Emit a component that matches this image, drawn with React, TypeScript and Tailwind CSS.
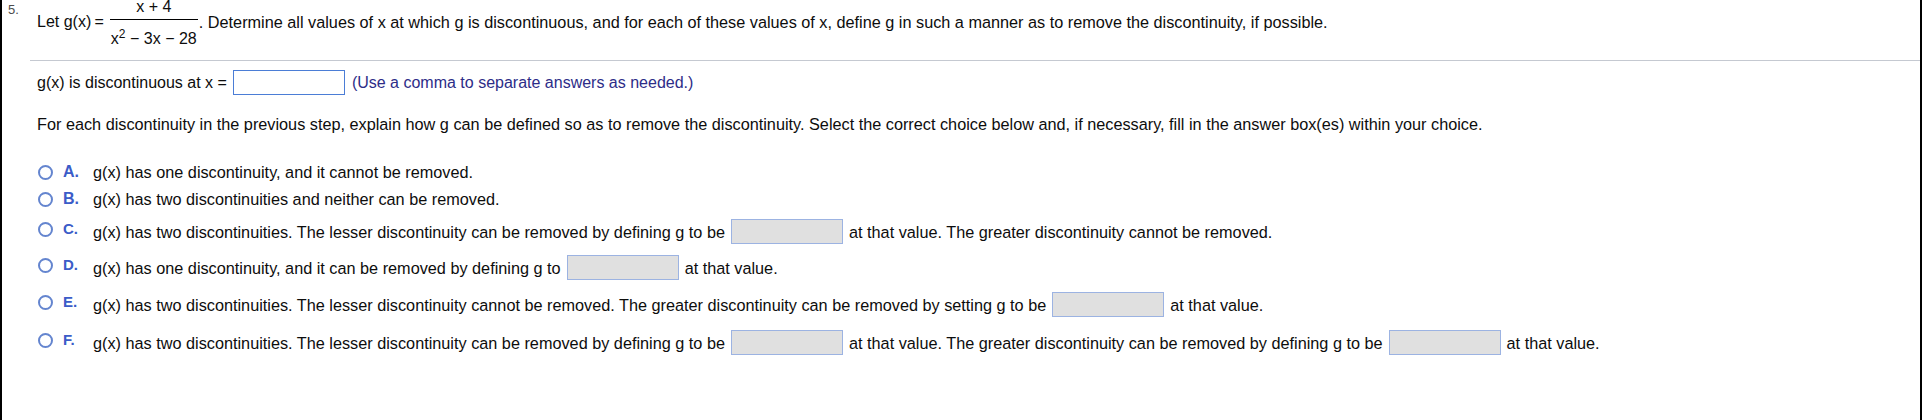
import React from 'react';

function Radio() {
  return <div className="h-[15px] w-[15px] shrink-0 rounded-full border-2 border-[#6485cf] bg-white" />;
}

function AnswerBox() {
  return <div className="mx-[6px] h-[25px] w-[112px] shrink-0 border border-[#9cb3e2] bg-[#e0e0e0]" />;
}

function SimpleOption({ letter, text }: { letter: string; text: string }) {
  return (
    <div className="flex h-[18px] items-center">
      <Radio />
      <div className="ml-[10px] w-[30px] font-bold text-[#3b5cc8]">{letter}</div>
      <div className="whitespace-nowrap text-[16.25px]">{text}</div>
    </div>
  );
}

function BoxOption({ letter, parts }: { letter: string; parts: string[] }) {
  return (
    <div className="flex h-[25px] items-start">
      <div className="mt-[1px] flex h-[18px] items-center">
        <Radio />
        <div className="ml-[10px] w-[30px] text-[15px] font-bold text-[#3b5cc8]">{letter}</div>
      </div>
      <div className="flex h-[25px] items-center whitespace-nowrap text-[16.25px]">
        {parts.map((p, i) => (
          <React.Fragment key={i}>
            {i > 0 && <AnswerBox />}
            <span>{p}</span>
          </React.Fragment>
        ))}
      </div>
    </div>
  );
}

export default function App() {
  return (
    <div className="flex h-[420px] w-[1922px] border-x-2 border-black bg-white font-['Liberation_Sans',Arial,sans-serif] text-[16px] leading-[18px] text-[#0d0d0d]">
      <div className="w-[28px] shrink-0 pl-[6px] pt-[2px] text-[13px] leading-[15px] text-[#4d4d4d]">5.</div>

      <div className="flex flex-1 flex-col">
        {/* question stem */}
        <div className="flex h-[60px] items-start pl-[7px] whitespace-nowrap">
          <div className="pt-[13px]">Let g(x)&thinsp;=</div>
          <div className="ml-[6px] flex w-[88px] flex-col items-center">
            <div className="h-[14px] leading-[14px]">x + 4</div>
            <div className="mt-[5px] h-px w-full bg-black" />
            <div className="mt-[9px] leading-[20px]">
              x<sup>2</sup> − 3x − 28
            </div>
          </div>
          <div className="ml-[1px] pt-[13px] text-[16.25px]">
            . Determine all values of x at which g is discontinuous, and for each of these values of x, define g in such a
            manner as to remove the discontinuity, if possible.
          </div>
        </div>

        <div className="h-px bg-[#c5c9d1]" />

        <div className="flex flex-col pl-[7px]">
          <div className="mt-[9px] flex h-[25px] items-center whitespace-nowrap">
            <span>g(x) is discontinuous at x =</span>
            <div className="ml-[6px] h-[25px] w-[112px] border border-[#4b7dd6] bg-white" />
            <span className="ml-[7px] text-[#2d2d88]">(Use a comma to separate answers as needed.)</span>
          </div>

          <div className="mt-[20px] whitespace-nowrap text-[16.25px]">
            For each discontinuity in the previous step, explain how g can be defined so as to remove the discontinuity. Select
            the correct choice below and, if necessary, fill in the answer box(es) within your choice.
          </div>

          <div className="mt-[30px] pl-[1px]">
            <SimpleOption letter="A." text="g(x) has one discontinuity, and it cannot be removed." />
          </div>
          <div className="mt-[9px] pl-[1px]">
            <SimpleOption letter="B." text="g(x) has two discontinuities and neither can be removed." />
          </div>
          <div className="mt-[11px] pl-[1px]">
            <BoxOption
              letter="C."
              parts={[
                'g(x) has two discontinuities. The lesser discontinuity can be removed by defining g to be',
                'at that value. The greater discontinuity cannot be removed.',
              ]}
            />
          </div>
          <div className="mt-[11px] pl-[1px]">
            <BoxOption
              letter="D."
              parts={['g(x) has one discontinuity, and it can be removed by defining g to', 'at that value.']}
            />
          </div>
          <div className="mt-[12px] pl-[1px]">
            <BoxOption
              letter="E."
              parts={[
                'g(x) has two discontinuities. The lesser discontinuity cannot be removed. The greater discontinuity can be removed by setting g to be',
                'at that value.',
              ]}
            />
          </div>
          <div className="mt-[13px] pl-[1px]">
            <BoxOption
              letter="F."
              parts={[
                'g(x) has two discontinuities. The lesser discontinuity can be removed by defining g to be',
                'at that value. The greater discontinuity can be removed by defining g to be',
                'at that value.',
              ]}
            />
          </div>
        </div>
      </div>
    </div>
  );
}
